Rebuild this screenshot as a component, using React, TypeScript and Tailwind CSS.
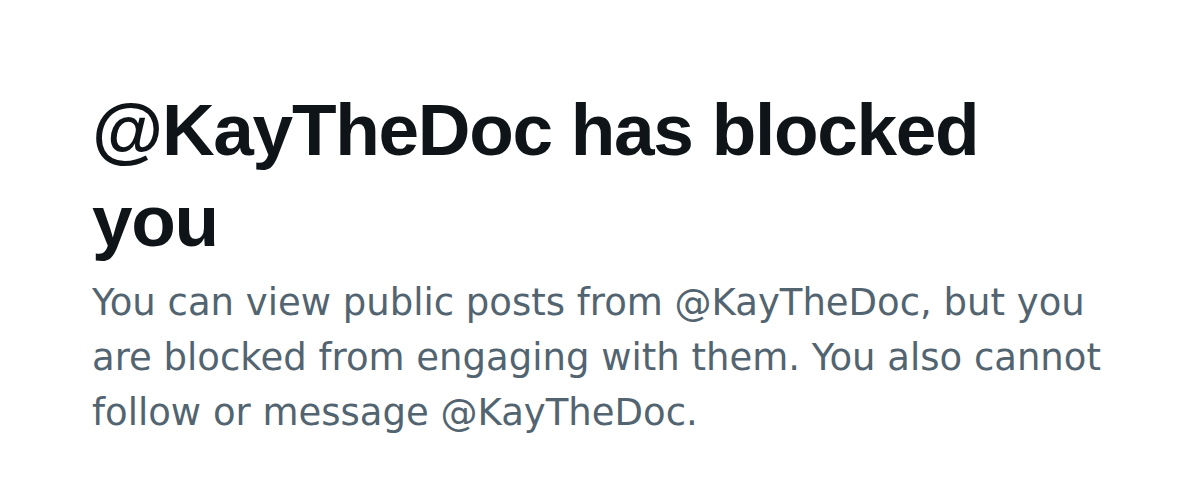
export default function App() {
  return (
    <main className="flex min-h-[503px] w-[1200px] flex-col bg-white pl-[92px] pt-[84px]">
      <h1 className="w-[1000px] font-['Liberation_Sans',Arial,sans-serif] text-[73px] leading-[91px] font-bold tracking-[-1.3px] text-[#0f1419]">
        @KayTheDoc has blocked you
      </h1>
      <p className="mt-[9px] w-[1045px] font-['DejaVu_Sans','Noto_Sans',sans-serif] text-[37px] leading-[55px] text-[#536471]">
        You can view public posts from @KayTheDoc, but you are blocked from engaging with them. You also cannot follow or message @KayTheDoc.
      </p>
    </main>
  );
}
